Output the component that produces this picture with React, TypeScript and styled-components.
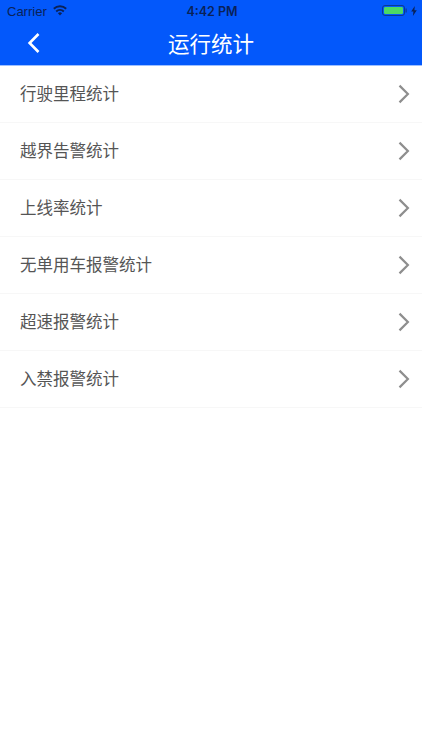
import styled, { createGlobalStyle } from "styled-components";

const GlobalStyle = createGlobalStyle`
    html, body {
        margin: 0;
        padding: 0;
        background-color: #ffffff;
    }
`;

const Page = styled.div`
    display: flex;
    flex-direction: column;
    width: 422px;
    height: 750px;
    overflow: hidden;
    background-color: #ffffff;
    font-family: "Noto Sans CJK SC", "Liberation Sans", sans-serif;
`;

const Header = styled.header`
    display: flex;
    flex-direction: column;
    height: 66px;
    box-sizing: border-box;
    border-bottom: 1px solid #9dbfff;
    background-color: #0358fb;
    color: #ffffff;
`;

const StatusBar = styled.div`
    display: grid;
    grid-template-columns: 1fr auto 1fr;
    align-items: center;
    height: 21px;
    padding: 0 5px 0 7px;
    font-family: "Liberation Sans", Arial, sans-serif;
    font-size: 13px;
    color: #0a2258;
`;

const Carrier = styled.div`
    display: flex;
    align-items: center;
    gap: 6px;
`;

const CarrierName = styled.span`
    padding-top: 2px;
`;

const Clock = styled.div`
    padding-top: 2px;
    font-family: Inter, "Liberation Sans", Arial, sans-serif;
    font-size: 12.5px;
    font-weight: 600;
`;

const BatteryGroup = styled.div`
    display: flex;
    justify-content: flex-end;
    align-items: center;
    gap: 4px;
`;

const NavBar = styled.div`
    display: grid;
    flex: 1;
    grid-template-columns: 1fr auto 1fr;
    align-items: center;
    padding: 0 26px;
`;

const BackButton = styled.div`
    display: flex;
`;

const Title = styled.h1`
    margin: 0;
    font-size: 21.5px;
    font-weight: 400;
    line-height: 28px;
`;

const List = styled.ul`
    margin: 0;
    padding: 0;
    list-style: none;
`;

const Row = styled.li`
    display: flex;
    justify-content: space-between;
    align-items: center;
    box-sizing: border-box;
    height: 57px;
    padding: 0 11px 0 20px;
    border-bottom: 1px solid #f7f7f7;
    font-size: 16.5px;
    color: #555555;
`;

const RowLabel = styled.span`
    margin-bottom: 2px;
`;

const items = ["行驶里程统计", "越界告警统计", "上线率统计", "无单用车报警统计", "超速报警统计", "入禁报警统计"];

function Wifi() {
    return (
        <svg width="14" height="11" viewBox="0 0 14 11">
            <path d="M7 10.6 4.9 8.2a3.1 3.1 0 0 1 4.2 0z" fill="#0a2258" />
            <path d="M3.2 6.4a5.7 5.7 0 0 1 7.6 0" stroke="#0a2258" strokeWidth="2" fill="none" />
            <path d="M.8 3.7a9.3 9.3 0 0 1 12.4 0" stroke="#0a2258" strokeWidth="2" fill="none" />
        </svg>
    );
}

function Battery() {
    return (
        <svg width="25" height="11" viewBox="0 0 25 11">
            <rect x="0.5" y="0.5" width="22" height="10" rx="2.5" fill="none" stroke="#0a3a94" />
            <rect x="2" y="2" width="19" height="7" rx="1.2" fill="#4cd964" />
            <rect x="23.5" y="3.5" width="1.2" height="4" fill="#0a3a94" />
        </svg>
    );
}

function Bolt() {
    return (
        <svg width="6" height="10" viewBox="0 0 6 10">
            <path d="M3.8 0 .2 5.6h2.2L1.9 10 5.8 4.2H3.4z" fill="#0a2258" />
        </svg>
    );
}

function BackIcon() {
    return (
        <svg width="14" height="24" viewBox="0 0 14 24">
            <path d="M12.5 3 3.6 12l8.9 9" stroke="#ffffff" strokeWidth="2.6" fill="none" />
        </svg>
    );
}

function ChevronIcon() {
    return (
        <svg width="14" height="22" viewBox="0 0 14 22">
            <path d="M2.5 2.6l8.4 8.4-8.4 8.4" stroke="#8e8e8e" strokeWidth="2.2" fill="none" />
        </svg>
    );
}

export default function App() {
    return (
        <Page>
            <GlobalStyle />
            <Header>
                <StatusBar>
                    <Carrier>
                        <CarrierName>Carrier</CarrierName>
                        <Wifi />
                    </Carrier>
                    <Clock>4:42 PM</Clock>
                    <BatteryGroup>
                        <Battery />
                        <Bolt />
                    </BatteryGroup>
                </StatusBar>
                <NavBar>
                    <BackButton>
                        <BackIcon />
                    </BackButton>
                    <Title>运行统计</Title>
                </NavBar>
            </Header>
            <List>
                {items.map((item) => (
                    <Row key={item}>
                        <RowLabel>{item}</RowLabel>
                        <ChevronIcon />
                    </Row>
                ))}
            </List>
        </Page>
    );
}
